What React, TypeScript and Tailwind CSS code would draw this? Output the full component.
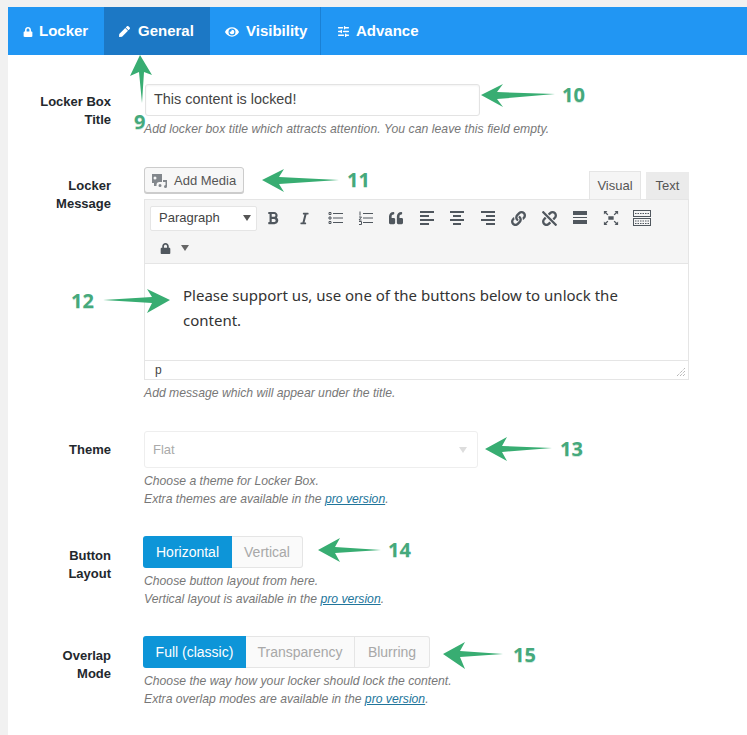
import { SlidersHorizontal } from "lucide-react";
import { FaBold, FaItalic, FaQuoteLeft, FaLink, FaUnlink, FaLock, FaPen, FaEye } from "react-icons/fa";
import type { ReactNode } from "react";

const tabs = [
  { label: "Locker", icon: <FaLock size={10} />, className: "w-[96px] pl-[15px] gap-[6px]" },
  { label: "General", icon: <FaPen size={11} />, className: "w-[106px] pl-[15px] gap-[8px] bg-[#1c78c5]" },
  { label: "Visibility", icon: <FaEye size={14} />, className: "w-[111px] pl-[15px] gap-[7px] border-r border-[#1a80d4]" },
  { label: "Advance", icon: <SlidersHorizontal size={13} strokeWidth={2.5} />, className: "w-[120px] pl-[16px] gap-[6px]" },
];

function Row({ label, labelClass, children, className }: { label: ReactNode; labelClass: string; children: ReactNode; className: string }) {
  return (
    <div className={`flex ${className}`}>
      <div className={`w-[103px] shrink-0 text-right text-[13px] font-bold leading-[18px] text-[#23282d] ${labelClass}`}>{label}</div>
      <div className="ml-[33px] min-w-0 flex-1">{children}</div>
    </div>
  );
}

function Hint({ children, className = "" }: { children: ReactNode; className?: string }) {
  return <p className={`mt-[5px] text-[12.2px] italic leading-[17.5px] text-[#777] ${className}`}>{children}</p>;
}

function Pro() {
  return <span className="text-[#21759b] underline">pro version</span>;
}

function Segments({ items }: { items: { label: string; w: string }[] }) {
  return (
    <div className="-ml-px flex h-[32px] text-[14px]">
      {items.map((it, i) => (
        <div
          key={it.label}
          className={`flex items-center justify-center ${it.w} ${
            i === 0
              ? "rounded-l-[3px] bg-[#0d95d8] font-medium text-white"
              : `border-y border-r border-[#e5e5e5] bg-[#fafafa] text-[#a8a8a8] ${i === items.length - 1 ? "rounded-r-[3px]" : ""}`
          }`}
        >
          {it.label}
        </div>
      ))}
    </div>
  );
}

function Lines({ d, w = 2 }: { d: string; w?: number }) {
  return (
    <svg width="18" height="18" viewBox="0 0 18 18" fill="none" stroke="#50575e" strokeWidth={w}>
      <path d={d} />
    </svg>
  );
}

function ToolBtn({ children, w = "w-[31px]" }: { children: ReactNode; w?: string }) {
  return <div className={`flex h-[26px] ${w} items-center justify-center text-[#50575e]`}>{children}</div>;
}

function Toolbar() {
  return (
    <div className="h-[65px] border border-[#e5e5e5] bg-[#f5f5f5] pl-[5px] pt-[5px]">
      <div className="flex items-center">
        <div className="flex h-[25px] w-[107px] items-center justify-between rounded-[2px] border border-[#e5e5e5] bg-white pl-[8px] pr-[5px] text-[13px] text-[#444]">
          Paragraph
          <span className="h-0 w-0 border-x-[4px] border-t-[6px] border-x-transparent border-t-[#555]" />
        </div>
        <ToolBtn w="w-[32px]"><FaBold size={14} /></ToolBtn>
        <ToolBtn w="w-[30px]"><FaItalic size={13} /></ToolBtn>
        <ToolBtn w="w-[33px]"><Lines w={1} d="M6 4.5h10M6 9h10M6 13.5h10M2 3.5h2v2H2zM2 8h2v2H2zM2 12.5h2v2H2z" /></ToolBtn>
        <ToolBtn w="w-[28px]"><Lines w={1} d="M6 4.5h10M6 9h10M6 13.5h10M3 2.5v4M2 8h2.5L2 11h2.5M2 12.5h2.5v3H2" /></ToolBtn>
        <ToolBtn w="w-[32px]"><FaQuoteLeft size={14} /></ToolBtn>
        <ToolBtn w="w-[29px]"><Lines d="M2 3h14M2 7h9M2 11h14M2 15h9" /></ToolBtn>
        <ToolBtn w="w-[32px]"><Lines d="M2 3h14M5 7h8M2 11h14M5 15h8" /></ToolBtn>
        <ToolBtn w="w-[29px]"><Lines d="M2 3h14M7 7h9M2 11h14M7 15h9" /></ToolBtn>
        <ToolBtn w="w-[32px]"><FaLink size={15} /></ToolBtn>
        <ToolBtn w="w-[30px]"><FaUnlink size={15} /></ToolBtn>
        <ToolBtn w="w-[31px]">
          <svg width="16" height="14" viewBox="0 0 16 14" fill="#50575e">
            <path d="M1 0h14v4H1zM1 6h14v1H1zM1 9h14v4H1z" />
          </svg>
        </ToolBtn>
        <ToolBtn w="w-[31px]">
          <svg width="18" height="16" viewBox="0 0 18 18" fill="#50575e">
            <path d="M6 7h6v4H6zM1 1h4L3.6 2.4 6 5 5 6 2.4 3.6 1 5zM17 1v4l-1.4-1.4L13 6l-1-1 2.4-2.6L13 1zM1 17v-4l1.4 1.4L5 12l1 1-2.4 2.6L5 17zM17 17h-4l1.4-1.4L12 13l1-1 2.6 2.4L17 13z" />
          </svg>
        </ToolBtn>
        <ToolBtn>
          <svg width="18" height="16" viewBox="0 0 18 16" fill="none" stroke="#50575e">
            <rect x="0.5" y="0.5" width="17" height="6" />
            <rect x="0.5" y="8.5" width="17" height="7" />
            <path d="M2 3.5h14M2 11h14M2 13.5h14" strokeDasharray="1.5 1" />
          </svg>
        </ToolBtn>
      </div>
      <div className="mt-[4px] flex h-[26px] w-[44px] items-center pl-[10px]">
        <FaLock size={11} className="text-[#50575e]" />
        <span className="ml-[10px] h-0 w-0 border-x-[4px] border-t-[6px] border-x-transparent border-t-[#666]" />
      </div>
    </div>
  );
}

function Editor() {
  return (
    <>
      <div className="flex h-[32px] justify-between">
        <div className="flex h-[26px] w-[100px] items-center rounded-[3px] border border-[#ccc] bg-[#f7f7f7] pl-[6px] pt-px text-[13px] text-[#555] shadow-[0_1px_0_#ccc]">
          <svg width="18" height="16" viewBox="0 0 18 16" fill="#82878c" className="mr-[5px]">
            <path d="M1 1h10v8H8.5a3 3 0 0 0-3 3v1H3v-3H1zM4 3.5a1.5 1.5 0 1 0 0 3 1.5 1.5 0 0 0 0-3z" fillRule="evenodd" />
            <path d="M12 7h4v6.5a1.5 1.5 0 1 1-1.5-1.5V9H12zM9 11a1.5 1.5 0 1 1 0 3 1.5 1.5 0 0 1 0-3z" />
          </svg>
          Add Media
        </div>
        <div className="flex h-[27px] items-end self-end text-[13px] text-[#555]">
          <div className="flex h-[28px] w-[52px] items-center justify-center border-x border-t border-[#e5e5e5] bg-[#f5f5f5]">Visual</div>
          <div className="ml-[5px] flex h-[27px] w-[43px] items-center justify-center bg-[#ebebeb]">Text</div>
        </div>
      </div>
      <Toolbar />
      <div className="h-[96px] border-x border-[#e5e5e5] bg-white pl-[38px] pr-[40px] pt-[19px] font-['Noto_Sans',sans-serif] text-[15px] leading-[25px] text-[#333]">
        Please support us, use one of the buttons below to unlock the content.
      </div>
      <div className="relative flex h-[20px] items-center border border-[#e5e5e5] bg-white pl-[10px] text-[12px] text-[#444]">
        p
        <svg width="10" height="10" viewBox="0 0 10 10" stroke="#999" className="absolute bottom-[2px] right-[2px]">
          <path d="M1 9 9 1M4 9l5-5M7 9l2-2" strokeDasharray="1 1" />
        </svg>
      </div>
    </>
  );
}

const arrows = [
  "M140 55 152 75 144 72 142 103 139 72 130 76Z",
  "M481 95 503 84 497 92 555 94 497 99 503 107Z",
  "M262 180 284 169 279 177 339 180 279 184 284 192Z",
  "M170 300 147 289 152 297 103 300 152 303 147 313Z",
  "M485 449 507 437 502 446 552 448 502 452 507 461Z",
  "M318 550 340 538 335 547 381 550 335 553 340 562Z",
  "M443 654 465 642 460 651 503 654 460 657 465 669Z",
];

const labels = [
  { n: "9", className: "left-[134px] top-[110px]" },
  { n: "10", className: "left-[562px] top-[83px]" },
  { n: "11", className: "left-[347px] top-[168px]" },
  { n: "12", className: "left-[71px] top-[289px]" },
  { n: "13", className: "left-[560px] top-[437px]" },
  { n: "14", className: "left-[388px] top-[538px]" },
  { n: "15", className: "left-[513px] top-[643px]" },
];

export default function App() {
  return (
    <div className="relative h-[735px] w-[747px] overflow-hidden bg-[#f1f1f1] pl-[8px] pt-[7px] font-['Liberation_Sans',sans-serif]">
      <div className="h-[728px] bg-white">
        <nav className="flex h-[48px] bg-[#2196f3] text-[15px] font-bold text-white">
          {tabs.map((t) => (
            <div key={t.label} className={`flex items-center pt-px ${t.className}`}>
              {t.icon}
              {t.label}
            </div>
          ))}
        </nav>

        <div className="w-[681px] pt-[29px]">
          <Row label={<>Locker Box<br />Title</>} labelClass="pt-[9px]" className="">
            <div className="ml-px flex h-[32px] w-[335px] items-center rounded-[3px] border border-[#e3e3e3] bg-white pl-[8px] text-[14.4px] text-[#444] shadow-[inset_0_1px_2px_rgba(0,0,0,0.05)]">
              This content is locked!
            </div>
            <Hint className="tracking-[0.05px]">Add locker box title which attracts attention. You can leave this field empty.</Hint>
          </Row>

          <Row label={<>Locker<br />Message</>} labelClass="pt-[10px]" className="mt-[28.5px]">
            <Editor />
            <Hint>Add message which will appear under the title.</Hint>
          </Row>

          <Row label="Theme" labelClass="pt-[10px]" className="mt-[28.5px]">
            <div className="flex h-[37px] w-[334px] items-center justify-between rounded-[3px] border border-[#eee] bg-white pl-[8px] pr-[10px] pt-px text-[13px] text-[#aaa]">
              Flat
              <span className="h-0 w-0 border-x-[4px] border-t-[6px] border-x-transparent border-t-[#ddd]" />
            </div>
            <Hint>Choose a theme for Locker Box.<br />Extra themes are available in the <Pro />.</Hint>
          </Row>

          <Row label={<>Button<br />Layout</>} labelClass="pt-[11px]" className="mt-[28px]">
            <Segments items={[{ label: "Horizontal", w: "w-[89px]" }, { label: "Vertical", w: "w-[71px]" }]} />
            <Hint>Choose button layout from here.<br />Vertical layout is available in the <Pro />.</Hint>
          </Row>

          <Row label={<>Overlap<br />Mode</>} labelClass="pt-[11px]" className="mt-[28px]">
            <Segments items={[{ label: "Full (classic)", w: "w-[103px]" }, { label: "Transparency", w: "w-[109px]" }, { label: "Blurring", w: "w-[75px]" }]} />
            <Hint>Choose the way how your locker should lock the content.<br />Extra overlap modes are available in the <Pro />.</Hint>
          </Row>
        </div>
      </div>

      {/* numbered callouts lying over the form */}
      <svg width="747" height="735" className="pointer-events-none absolute left-0 top-0">
        {arrows.map((d) => (
          <path key={d} d={d} fill="#38ad72" />
        ))}
      </svg>
      {labels.map((l) => (
        <span
          key={l.n}
          className={`absolute font-['Open_Sans',sans-serif] text-[20px] font-bold leading-[24px] text-[#45a97c] [text-shadow:0_1px_0_#cfe8dc] ${l.className}`}
        >
          {l.n}
        </span>
      ))}
    </div>
  );
}
